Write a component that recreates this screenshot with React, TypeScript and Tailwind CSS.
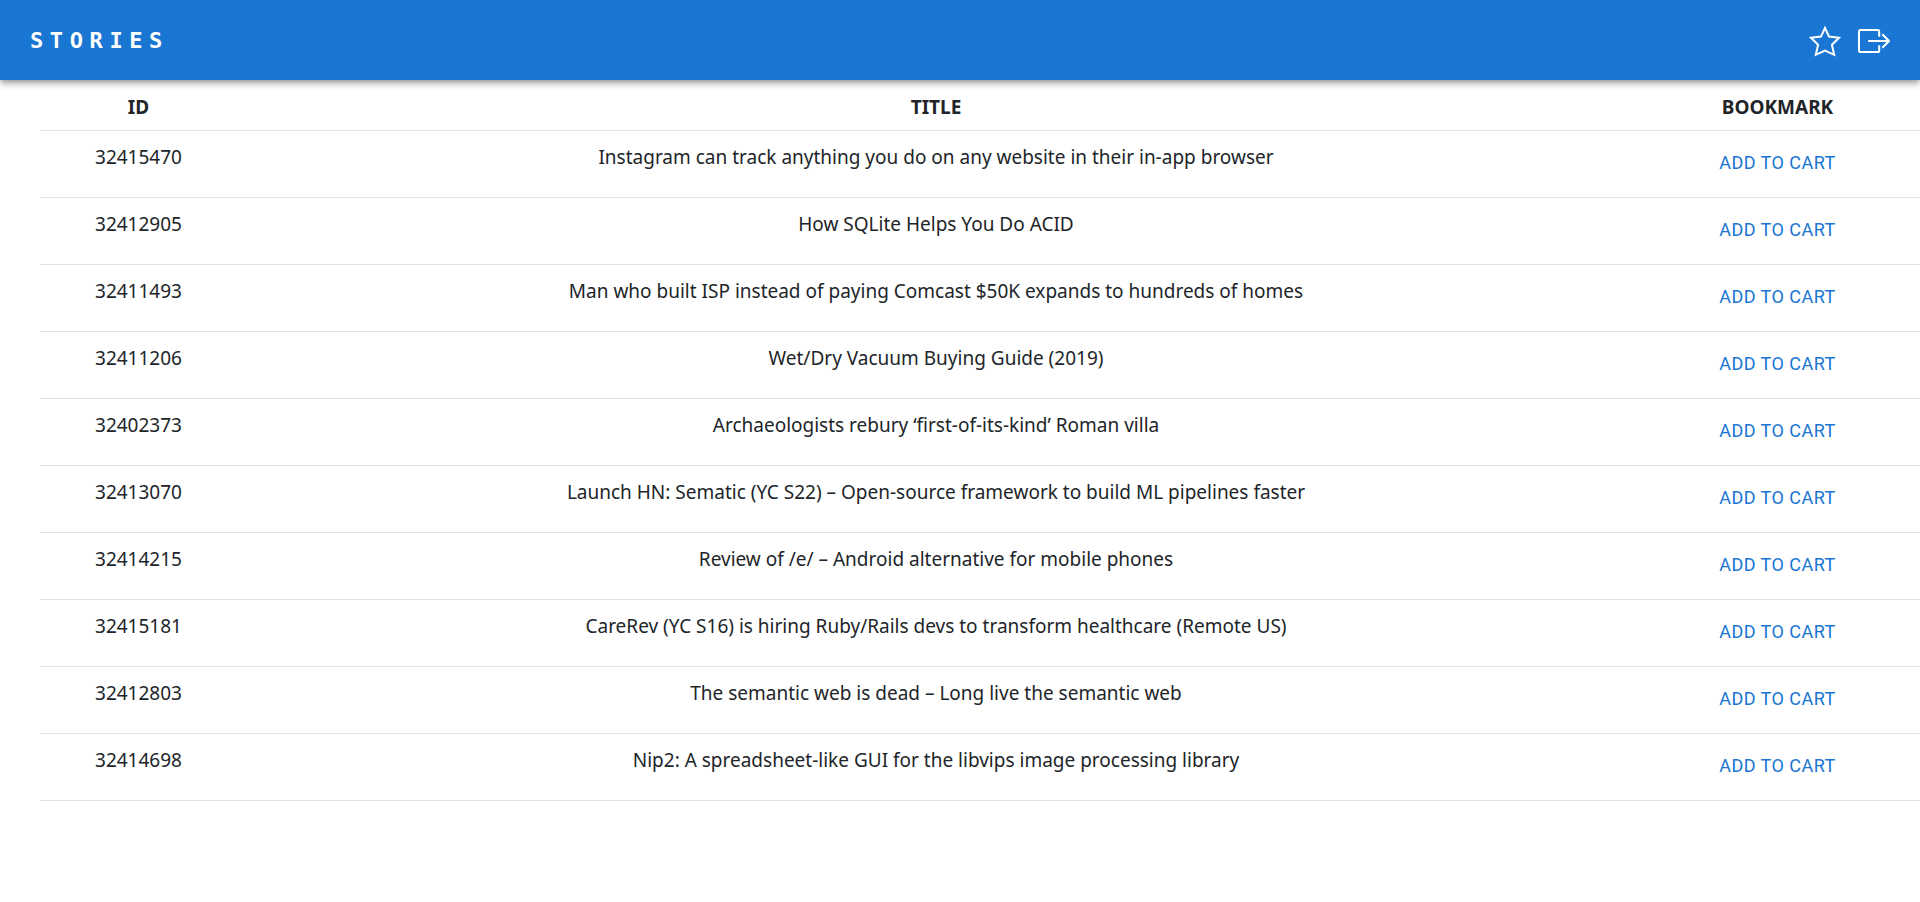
import React from "react";

type Story = { id: number; title: string };

const stories: Story[] = [
  { id: 32415470, title: "Instagram can track anything you do on any website in their in-app browser" },
  { id: 32412905, title: "How SQLite Helps You Do ACID" },
  { id: 32411493, title: "Man who built ISP instead of paying Comcast $50K expands to hundreds of homes" },
  { id: 32411206, title: "Wet/Dry Vacuum Buying Guide (2019)" },
  { id: 32402373, title: "Archaeologists rebury ‘first-of-its-kind’ Roman villa" },
  { id: 32413070, title: "Launch HN: Sematic (YC S22) – Open-source framework to build ML pipelines faster" },
  { id: 32414215, title: "Review of /e/ – Android alternative for mobile phones" },
  { id: 32415181, title: "CareRev (YC S16) is hiring Ruby/Rails devs to transform healthcare (Remote US)" },
  { id: 32412803, title: "The semantic web is dead – Long live the semantic web" },
  { id: 32414698, title: "Nip2: A spreadsheet-like GUI for the libvips image processing library" },
];

function StarIcon() {
  return (
    <svg viewBox="0 1 32 32" className="size-8" fill="none" stroke="currentColor" strokeWidth="2" aria-hidden="true">
      <path d="M16 3.8 L20 12.6 L30 13.7 L22.9 20.7 L25.2 30.8 L16 26.6 L6.8 30.8 L9.1 20.7 L2 13.7 L12 12.6 Z" />
    </svg>
  );
}

function LogoutIcon() {
  return (
    <svg viewBox="0 1 32 32" className="size-8" fill="none" stroke="currentColor" strokeWidth="2" aria-hidden="true">
      <path d="M21.2 12.8 V7.6 Q21.2 6 19.6 6 H2.6 Q1 6 1 7.6 V26.4 Q1 28 2.6 28 H19.6 Q21.2 28 21.2 26.4 V21.2" />
      <path d="M10.2 17 H31 M24.3 10.3 L31 17 L24.3 23.7" />
    </svg>
  );
}

function Header() {
  return (
    <header className="relative flex h-20 items-center justify-between bg-[#1976d2] px-[30px] pt-0.5 text-white shadow-[0_2px_5px_-1px_rgba(0,0,0,0.3),0_5px_6px_rgba(0,0,0,0.14),0_1px_12px_rgba(0,0,0,0.12)]">
      <a href="#" className="font-['DejaVu_Sans_Mono',monospace] text-[22px] leading-8 font-bold tracking-[0.3em]">
        STORIES
      </a>
      <nav className="flex items-center gap-[17px]">
        <button type="button" aria-label="Bookmarks">
          <StarIcon />
        </button>
        <button type="button" aria-label="Log out">
          <LogoutIcon />
        </button>
      </nav>
    </header>
  );
}

export default function App() {
  return (
    <div className="min-h-screen bg-white font-['Noto_Sans',sans-serif] text-[19px] leading-[30px] text-[#212529]">
      <Header />
      <main className="pl-10">
        <table className="w-full table-fixed border-collapse text-center">
          <thead>
            <tr className="h-[50px] border-b border-[#dee2e6]">
              <th scope="col" className="w-[197px] pt-1 font-bold">ID</th>
              <th scope="col" className="pt-1 font-bold">TITLE</th>
              <th scope="col" className="w-[285px] pt-1 font-bold">BOOKMARK</th>
            </tr>
          </thead>
          <tbody>
            {stories.map((story) => (
              <tr key={story.id} className="h-[67px] border-b border-[#dee2e6] align-top">
                <td className="pt-[11px]">{story.id}</td>
                <td className="pt-[11px]">{story.title}</td>
                <td className="pt-[11px]">
                  <button
                    type="button"
                    className="px-2 py-1.5 font-[Roboto,sans-serif] text-[18px] leading-[30px] tracking-wide text-[#1976d2]"
                  >
                    ADD TO CART
                  </button>
                </td>
              </tr>
            ))}
          </tbody>
        </table>
      </main>
    </div>
  );
}
